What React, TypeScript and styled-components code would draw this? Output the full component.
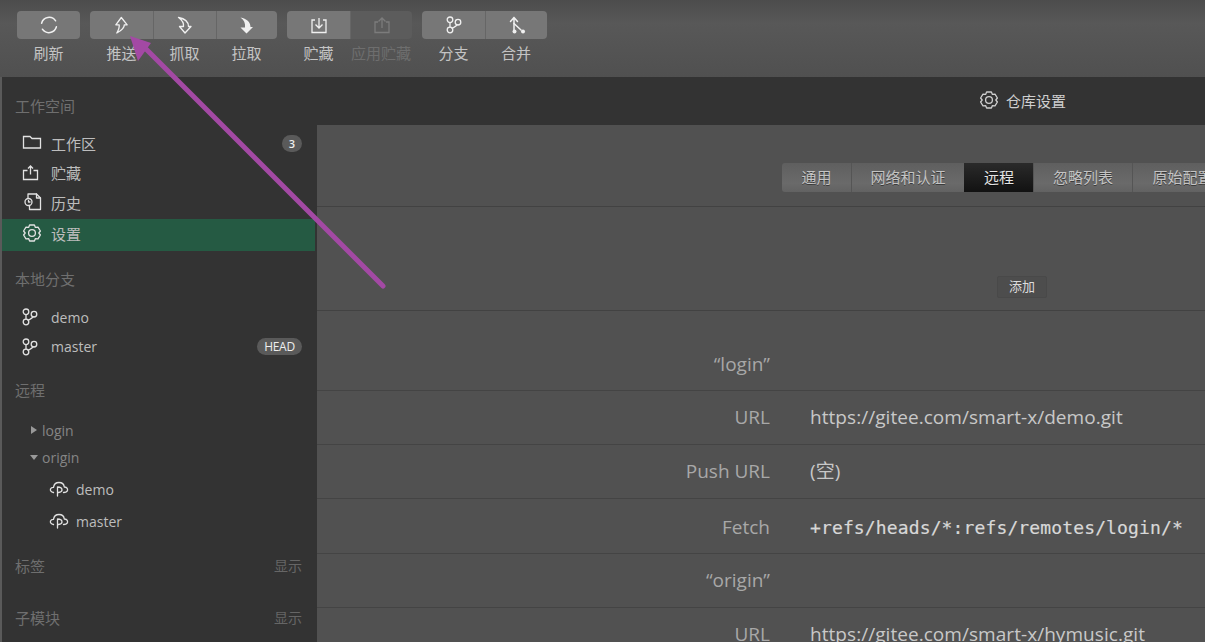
import React from "react";
import styled, { createGlobalStyle } from "styled-components";

const GlobalStyle = createGlobalStyle`
  html, body {
    margin: 0;
    padding: 0;
    background: #333;
    overflow: hidden;
  }
  body {
    font-family: "Open Sans", "Noto Sans CJK SC", sans-serif;
  }
`;

const Page = styled.div`
  position: relative;
  width: 1205px;
  height: 642px;
  overflow: hidden;
  display: flex;
  flex-direction: column;
`;

const Toolbar = styled.div`
  height: 77px;
  flex: none;
  box-sizing: border-box;
  padding: 11px 0 0 17px;
  display: flex;
  gap: 10px;
  background: linear-gradient(#4c4c4c, #585858 30%, #505050);
`;

const ToolGroup = styled.div`
  display: flex;
  flex-direction: column;
`;

const ToolButtons = styled.div`
  display: flex;
  height: 28px;
  border-radius: 4px;
  overflow: hidden;
`;

const ToolButton = styled.div<{ $w: number; $off?: boolean }>`
  width: ${(p) => p.$w}px;
  box-sizing: border-box;
  display: flex;
  align-items: center;
  justify-content: center;
  background: ${(p) => (p.$off ? "#5c5c5c" : "#777")};
  color: ${(p) => (p.$off ? "#7c7c7c" : "#f0f0f0")};
  & + & {
    border-left: 1px solid #666;
  }
`;

const ToolLabels = styled.div`
  display: flex;
`;

const ToolLabel = styled.div<{ $w: number; $off?: boolean }>`
  width: ${(p) => p.$w}px;
  text-align: center;
  margin-top: 4px;
  font-size: 15px;
  line-height: 20px;
  white-space: nowrap;
  color: ${(p) => (p.$off ? "#6e6e6e" : "#c4c4c4")};
`;

const Body = styled.div`
  flex: 1;
  display: flex;
  min-height: 0;
  border-left: 2px solid #5a5a5a;
`;

const Sidebar = styled.div`
  width: 315px;
  flex: none;
  box-sizing: border-box;
  padding: 15px 2px 0 0;
  background: #333;
`;

const SideHeading = styled.div<{ $top?: number; $bottom?: number }>`
  height: 28px;
  line-height: 28px;
  margin-top: ${(p) => p.$top ?? 0}px;
  margin-bottom: ${(p) => p.$bottom ?? 0}px;
  padding: 0 13px;
  font-size: 15px;
  color: #6f6f6f;
  display: flex;
  justify-content: space-between;
`;

const ShowLink = styled.span`
  color: #666;
  font-size: 14px;
`;

const SideRow = styled.div<{ $h?: number; $pb?: number; $active?: boolean; $indent?: number }>`
  height: ${(p) => p.$h ?? 30}px;
  display: flex;
  align-items: center;
  box-sizing: border-box;
  padding: 0 13px ${(p) => p.$pb ?? 0}px ${(p) => p.$indent ?? 20}px;
  font-size: 15px;
  color: #bdbdbd;
  background: ${(p) => (p.$active ? "#255a43" : "transparent")};
`;

const SideIcon = styled.span<{ $w?: number; $shift?: number }>`
  width: ${(p) => p.$w ?? 29}px;
  flex: none;
  display: flex;
  align-items: center;
  color: #e2e2e2;
  svg {
    margin-left: ${(p) => p.$shift ?? 0}px;
  }
`;

const Name = styled.span`
  font-size: 14px;
`;

const Count = styled.span`
  margin-left: auto;
  height: 17px;
  min-width: 20px;
  box-sizing: border-box;
  border-radius: 9px;
  background: #5a5a5a;
  color: #eee;
  font-size: 11px;
  font-weight: 600;
  line-height: 17px;
  text-align: center;
`;

const HeadTag = styled(Count)`
  width: 45px;
  font-weight: 400;
  font-size: 12px;
  letter-spacing: -0.3px;
`;

const RemoteRow = styled(SideRow)`
  color: #858585;
`;

const Caret = styled.span<{ $open?: boolean }>`
  width: 12px;
  flex: none;
  display: flex;
  justify-content: center;
  font-size: 0;
  margin-right: 2px;
  &::before {
    content: "";
    border-style: solid;
    border-color: transparent;
    ${(p) =>
      p.$open
        ? "border-width: 5px 4.5px 0; border-top-color: #999;"
        : "border-width: 4.5px 0 4.5px 6px; border-left-color: #999;"}
  }
`;

const Main = styled.div`
  flex: 1;
  min-width: 0;
  overflow: hidden;
  background: #515151;
`;

const Header = styled.div`
  height: 48px;
  box-sizing: border-box;
  padding: 0 0 2px 662px;
  display: flex;
  align-items: center;
  gap: 7px;
  background: #333;
  color: #cfcfcf;
  font-size: 15px;
`;

const TabSection = styled.div`
  height: 82px;
  box-sizing: border-box;
  padding: 38px 0 0 465px;
  border-bottom: 1px solid #424242;
`;

const Tabs = styled.div`
  display: flex;
  width: 620px;
  height: 29px;
`;

const Tab = styled.div<{ $w: number; $active?: boolean }>`
  width: ${(p) => p.$w}px;
  flex: none;
  box-sizing: border-box;
  text-align: center;
  font-size: 15px;
  line-height: 29px;
  white-space: nowrap;
  color: ${(p) => (p.$active ? "#e4e4e4" : "#c4c4c4")};
  text-shadow: 0 1px 0 rgba(0, 0, 0, 0.45);
  background: ${(p) =>
    p.$active
      ? "linear-gradient(#2a2a2a, #121212)"
      : "linear-gradient(#5f5f5f, #6a6a6a 70%, #626262)"};
  border-left: 1px solid ${(p) => (p.$active ? "transparent" : "#555")};
  &:first-child {
    border-radius: 3px 0 0 3px;
    border-left: 0;
  }
`;

const AddSection = styled.div`
  height: 104px;
  box-sizing: border-box;
  padding: 69px 0 0 680px;
  border-bottom: 1px solid #424242;
`;

const AddButton = styled.div`
  width: 50px;
  height: 22px;
  box-sizing: border-box;
  border: 1px solid #494949;
  border-radius: 2px;
  background: #4d4d4d;
  color: #dcdcdc;
  font-size: 13px;
  line-height: 18px;
  text-align: center;
`;

const FormRow = styled.div<{ $h?: number; $top?: number }>`
  height: ${(p) => p.$h ?? 54}px;
  box-sizing: border-box;
  padding-top: ${(p) => p.$top ?? 0}px;
  display: grid;
  grid-template-columns: 453px 1fr;
  column-gap: 40px;
  border-bottom: 1px solid #444;
  font-size: 19px;
  line-height: 53px;
  white-space: nowrap;
`;

const FormLabel = styled.div`
  text-align: right;
  color: #a8a8a8;
`;

const FormValue = styled.div`
  color: #c8c8c8;
  letter-spacing: 0.05px;
`;

const MonoValue = styled(FormValue)`
  font-family: "DejaVu Sans Mono", monospace;
  font-size: 18px;
  letter-spacing: 0.13px;
  color: #d8d8d8;
  -webkit-text-stroke: 0.2px #d8d8d8;
`;

const PointerArrow = styled.svg`
  position: absolute;
  left: 0;
  top: 0;
  pointer-events: none;
`;

const line = {
  fill: "none",
  stroke: "currentColor",
  strokeWidth: 1.3,
  strokeLinecap: "round" as const,
  strokeLinejoin: "round" as const,
};

const Icon: React.FC<{ children: React.ReactNode }> = ({ children }) => (
  <svg width={20} height={20} viewBox="0 0 20 20">
    {children}
  </svg>
);

const RefreshIcon = () => (
  <Icon>
    <g {...line} strokeWidth={1.5}>
      <path d="M2.6 8.2 A7.8 7.8 0 0 1 16.6 5.8" />
      <path d="M17.4 11.8 A7.8 7.8 0 0 1 3.4 14.2" />
    </g>
  </Icon>
);

const PushIcon = () => (
  <Icon>
    <path {...line} d="M9.3 2.5 L3.8 9.8 H7.2 C7.5 12 6.5 15 4.8 18 C9.5 15.5 12.5 13 12.3 9.8 H15.2 Z" />
  </Icon>
);

const FetchIcon = () => (
  <Icon>
    <path {...line} d="M3.5 2.5 C9 3.5 13.5 6.5 13.5 11.5 H16 L10 18 L4.5 11.5 H8.5 C9 8 7 5 3.5 2.5 Z" />
  </Icon>
);

const PullIcon = () => (
  <Icon>
    <path fill="currentColor" d="M3.5 2.5 C9.5 3.5 13.5 7 13.5 12 H16 L9.5 18.5 L3.5 12.5 H8 C8.5 8 7 5 3.5 2.5 Z" />
  </Icon>
);

const StashIcon = () => (
  <Icon>
    <g {...line} strokeLinejoin="miter" strokeLinecap="butt">
      <path d="M6 5 H3 V17.5 H17 V5 H14" />
      <path d="M10 3 V12.5 M6.5 9.5 L10 13 L13.5 9.5" />
    </g>
  </Icon>
);

const ApplyStashIcon = () => (
  <Icon>
    <g {...line} strokeLinejoin="miter" strokeLinecap="butt">
      <path d="M6 7 H3 V17.5 H17 V7 H14" />
      <path d="M10 13 V3 M6.5 6.5 L10 3 L13.5 6.5" />
    </g>
  </Icon>
);

const BranchIcon = () => (
  <Icon>
    <g {...line}>
      <circle cx="6" cy="4.8" r="2.8" />
      <circle cx="14" cy="7.2" r="2.8" />
      <circle cx="6" cy="15" r="2.8" />
      <path d="M6 7.6 V12.2 M13 9.8 C12.5 11.5 10.5 12 8 13.2" />
    </g>
  </Icon>
);

const MergeIcon = () => (
  <Icon>
    <g {...line} strokeWidth={1.5}>
      <path d="M7 17 V2.5 M3.5 6.5 L7 2.5 L10.5 6.5" />
      <path d="M7 8.5 L14 15" />
    </g>
    <circle cx="7.5" cy="16.5" r="2" fill="currentColor" />
    <circle cx="16" cy="16.5" r="2" fill="currentColor" />
  </Icon>
);

const FolderIcon = () => (
  <Icon>
    <path {...line} strokeLinejoin="miter" d="M1.5 3.5 H8 L10 5.5 H18.5 V15 H1.5 Z" />
  </Icon>
);

const ShareIcon = () => (
  <Icon>
    <g {...line} strokeLinejoin="miter" strokeLinecap="butt">
      <path d="M5.5 7.5 H1.5 V16.5 H15.5 V7.5 H11.5" />
      <path d="M8.5 11.5 V3 M6 5.5 L8.5 3 L11 5.5" />
    </g>
  </Icon>
);

const HistoryIcon = () => (
  <Icon>
    <g {...line}>
      <path d="M6 6 V2 H14.5 L18.5 6 V17.5 H7.5 V13.5" />
      <path d="M14.5 2 V6 H18.5" />
      <circle cx="6.5" cy="10" r="3.5" />
      <path d="M6.5 8.4 V10 H8" />
    </g>
  </Icon>
);

const GearIcon = () => (
  <Icon>
    <g {...line}>
      <path d="M7.6 2 H12.4 L13.4 4.4 L16 4.1 L18.4 8 L16.8 10 L18.4 12 L16 15.9 L13.4 15.6 L12.4 18 H7.6 L6.6 15.6 L4 15.9 L1.6 12 L3.2 10 L1.6 8 L4 4.1 L6.6 4.4 Z" />
      <circle cx="10" cy="10" r="3.4" />
    </g>
  </Icon>
);

const CloudIcon = () => (
  <Icon>
    <g {...line}>
      <path d="M4.5 13.5 C2 13 1 11.5 1.5 10 C2 8.5 3.5 8.3 4.5 8.3 C5 5 7.5 3.5 10 3.5 C13 3.5 15 5.5 15.3 8 C17.5 8 19 9.5 18.5 11.5 C18 13 16.5 13.5 14.5 13.5" />
      <path d="M8.5 8 V17 M8.5 8 C11 8 13 9 13 11 C13 12.5 11.5 13.2 9.5 13.5" />
    </g>
  </Icon>
);

const App: React.FC = () => {
  return (
    <Page>
      <GlobalStyle />
      <Toolbar>
        <ToolGroup>
          <ToolButtons>
            <ToolButton $w={63}><RefreshIcon /></ToolButton>
          </ToolButtons>
          <ToolLabels>
            <ToolLabel $w={63}>刷新</ToolLabel>
          </ToolLabels>
        </ToolGroup>
        <ToolGroup>
          <ToolButtons>
            <ToolButton $w={63}><PushIcon /></ToolButton>
            <ToolButton $w={63}><FetchIcon /></ToolButton>
            <ToolButton $w={61}><PullIcon /></ToolButton>
          </ToolButtons>
          <ToolLabels>
            <ToolLabel $w={63}>推送</ToolLabel>
            <ToolLabel $w={63}>抓取</ToolLabel>
            <ToolLabel $w={61}>拉取</ToolLabel>
          </ToolLabels>
        </ToolGroup>
        <ToolGroup>
          <ToolButtons>
            <ToolButton $w={63}><StashIcon /></ToolButton>
            <ToolButton $w={62} $off><ApplyStashIcon /></ToolButton>
          </ToolButtons>
          <ToolLabels>
            <ToolLabel $w={63}>贮藏</ToolLabel>
            <ToolLabel $w={62} $off>应用贮藏</ToolLabel>
          </ToolLabels>
        </ToolGroup>
        <ToolGroup>
          <ToolButtons>
            <ToolButton $w={63}><BranchIcon /></ToolButton>
            <ToolButton $w={62}><MergeIcon /></ToolButton>
          </ToolButtons>
          <ToolLabels>
            <ToolLabel $w={63}>分支</ToolLabel>
            <ToolLabel $w={62}>合并</ToolLabel>
          </ToolLabels>
        </ToolGroup>
      </Toolbar>

      <Body>
        <Sidebar>
          <SideHeading $bottom={8}>工作空间</SideHeading>
          <SideRow><SideIcon><FolderIcon /></SideIcon>工作区<Count>3</Count></SideRow>
          <SideRow $h={29}><SideIcon><ShareIcon /></SideIcon>贮藏</SideRow>
          <SideRow $h={32} $pb={2}><SideIcon><HistoryIcon /></SideIcon>历史</SideRow>
          <SideRow $h={32} $pb={4} $active><SideIcon><GearIcon /></SideIcon>设置</SideRow>

          <SideHeading $top={14} $bottom={9}>本地分支</SideHeading>
          <SideRow><SideIcon $shift={-2}><BranchIcon /></SideIcon><Name>demo</Name></SideRow>
          <SideRow $h={29}><SideIcon $shift={-2}><BranchIcon /></SideIcon><Name>master</Name><HeadTag>HEAD</HeadTag></SideRow>

          <SideHeading $top={15} $bottom={12}>远程</SideHeading>
          <RemoteRow $h={28} $indent={26}><Caret /><Name>login</Name></RemoteRow>
          <RemoteRow $h={29} $pb={2} $indent={26}><Caret $open /><Name>origin</Name></RemoteRow>
          <SideRow $h={32} $indent={47}><SideIcon $w={27}><CloudIcon /></SideIcon><Name>demo</Name></SideRow>
          <SideRow $h={32} $indent={47}><SideIcon $w={27}><CloudIcon /></SideIcon><Name>master</Name></SideRow>

          <SideHeading $top={15}>标签<ShowLink>显示</ShowLink></SideHeading>
          <SideHeading $top={24}>子模块<ShowLink>显示</ShowLink></SideHeading>
        </Sidebar>

        <Main>
          <Header><GearIcon />仓库设置</Header>
          <TabSection>
            <Tabs>
              <Tab $w={69}>通用</Tab>
              <Tab $w={113}>网络和认证</Tab>
              <Tab $w={69} $active>远程</Tab>
              <Tab $w={99}>忽略列表</Tab>
              <Tab $w={100}>原始配置</Tab>
            </Tabs>
          </TabSection>
          <AddSection>
            <AddButton>添加</AddButton>
          </AddSection>
          <FormRow $h={80} $top={27}>
            <FormLabel>“login”</FormLabel>
            <FormValue />
          </FormRow>
          <FormRow>
            <FormLabel>URL</FormLabel>
            <FormValue>https://gitee.com/smart-x/demo.git</FormValue>
          </FormRow>
          <FormRow>
            <FormLabel>Push URL</FormLabel>
            <FormValue>(空)</FormValue>
          </FormRow>
          <FormRow $h={55} $top={2}>
            <FormLabel>Fetch</FormLabel>
            <MonoValue>+refs/heads/*:refs/remotes/login/*</MonoValue>
          </FormRow>
          <FormRow>
            <FormLabel>“origin”</FormLabel>
            <FormValue />
          </FormRow>
          <FormRow>
            <FormLabel>URL</FormLabel>
            <FormValue>https://gitee.com/smart-x/hymusic.git</FormValue>
          </FormRow>
        </Main>
      </Body>

      <PointerArrow width="1205" height="642" viewBox="0 0 1205 642">
        <path d="M383 286 L145 48" stroke="#a349a4" strokeWidth="5" strokeLinecap="round" fill="none" />
        <path d="M130 36 L151 43 L138 61 Z" fill="#a349a4" />
      </PointerArrow>
    </Page>
  );
};

export default App;
